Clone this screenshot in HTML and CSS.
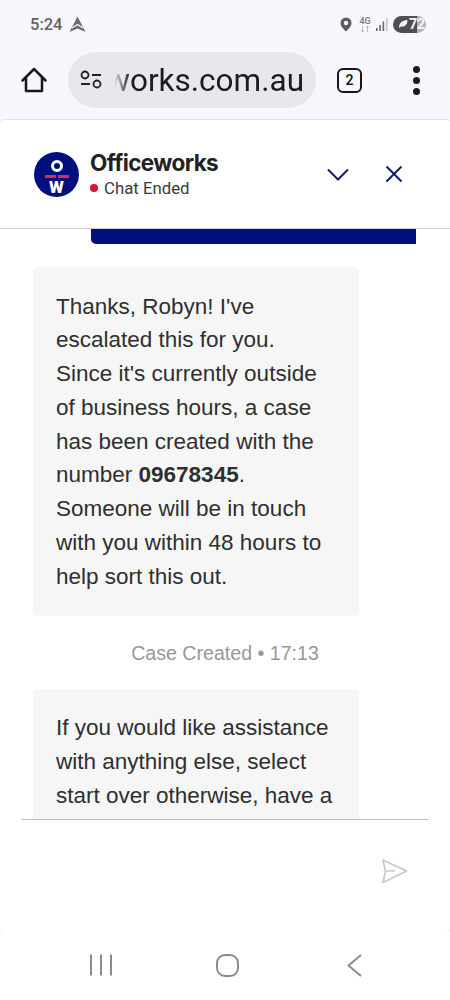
FILE: index.html
```html
<!DOCTYPE html>
<html lang="en">
<head>
    <meta charset="UTF-8">
    <meta name="viewport" content="width=device-width, initial-scale=1.0">
    <title>Officeworks chat</title>
    <link rel="stylesheet" href="styles.css">
</head>
<body>
    <div class="status_bar">
        <div class="status_left">
            <span class="clock">5:24</span>
            <svg class="nav_arrow" width="17" height="17" viewBox="0 0 17 17"><path d="M8.500 0.500 16.500 16 8.500 12.500 0.500 16Z" fill="#6b6b70"/><path d="M3 12 8.500 8.500 14 12" fill="none" stroke="#f8f7fd" stroke-width="1.300"/></svg>
        </div>
        <div class="status_right">
            <svg width="12" height="15" viewBox="0 0 12 15"><path fill-rule="evenodd" d="M6 0.500a5.500 5.500 0 0 1 5.500 5.500c0 3.500-3.500 6.500-5.500 8.500C4 12.500 0.500 9.500 0.500 6A5.500 5.500 0 0 1 6 0.500Zm0 3.300a2.200 2.200 0 1 0 0 4.400 2.200 2.200 0 0 0 0-4.400Z" fill="#5c5c60"/></svg>
            <div class="net">
                <span class="net_label">4G</span>
                <svg width="10" height="6" viewBox="0 0 10 6"><path d="M2.500 0v6M1 4.500 2.500 6 4 4.500M7.500 6V0M6 1.500 7.500 0 9 1.500" fill="none" stroke="#b0b0b4" stroke-width="0.900"/></svg>
            </div>
            <svg class="signal" width="12" height="14" viewBox="0 0 12 14"><rect x="0" y="11" width="1.600" height="3" fill="#67676b"/><rect x="3.300" y="8" width="1.600" height="6" fill="#67676b"/><rect x="6.600" y="4.500" width="1.600" height="9.500" fill="#67676b"/><rect x="10" y="1" width="1.600" height="13" fill="#c4c4c8"/></svg>
            <div class="battery">
                <svg width="10" height="10" viewBox="0 0 10 10"><path d="M1 9C1 4 4 1.500 9.500 1 9.500 6 6.500 8 3 7.500Z" fill="#f4f4f6"/></svg>
                <span>72</span>
            </div>
        </div>
    </div>

    <div class="toolbar">
        <svg class="home_icon" width="28" height="28" viewBox="0 0 28 28"><path d="M2.500 14.500 14 3 25.500 14.500M6 11.500V25H22V11.500" fill="none" stroke="#17171a" stroke-width="2.500" stroke-linejoin="round" stroke-linecap="round"/></svg>
        <div class="url_box">
            <svg class="tune_icon" width="22" height="20" viewBox="0 0 22 20"><circle cx="5" cy="5" r="3.500" fill="none" stroke="#222" stroke-width="1.800"/><path d="M12 5H21M1 14H10" stroke="#222" stroke-width="1.800" fill="none"/><circle cx="17" cy="14" r="3.500" fill="none" stroke="#222" stroke-width="1.800"/></svg>
            <div class="url_clip"><span>officeworks.com.au</span></div>
        </div>
        <div class="tab_count">2</div>
        <div class="menu_dots"><i></i><i></i><i></i></div>
    </div>

    <div class="chat_panel">
        <div class="chat_head">
            <div class="logo">
                <span class="logo_o"></span>
                <span class="logo_bars"><i></i><i></i></span>
                <span class="logo_w">W</span>
            </div>
            <div class="head_text">
                <div class="brand">Officeworks</div>
                <div class="chat_state"><i class="dot"></i>Chat Ended</div>
            </div>
            <div class="head_btns">
                <svg width="22" height="13" viewBox="0 0 22 13"><path d="M1 1.500 11 11.500 21 1.500" fill="none" stroke="#101a6e" stroke-width="2"/></svg>
                <svg width="18" height="18" viewBox="0 0 18 18"><path d="M1.500 1.500 16.500 16.500M16.500 1.500 1.500 16.500" fill="none" stroke="#101a6e" stroke-width="2"/></svg>
            </div>
        </div>

        <div class="messages">
            <div class="sent_bar"></div>
            <div class="bubble">Thanks, Robyn! I've escalated this for you. Since it's currently outside of business hours, a case has been created with the number <strong>09678345</strong>. Someone will be in touch with you within 48 hours to help sort this out.</div>
            <div class="msg_meta">Case Created • 17:13</div>
            <div class="bubble">If you would like assistance with anything else, select start over otherwise, have a great day!</div>
        </div>

        <div class="composer">
            <svg width="27" height="27" viewBox="0 0 27 27"><path d="M2 2 25.500 13 2 24.500 4.500 13ZM4.500 13H14" fill="none" stroke="#c6c8cb" stroke-width="1.700" stroke-linejoin="round"/></svg>
        </div>
    </div>

    <div class="nav_bar">
        <svg width="22" height="22" viewBox="0 0 22 22"><path d="M1 0.500V21.500M11 0.500V21.500M21 0.500V21.500" stroke="#8b8b8b" stroke-width="2" fill="none"/></svg>
        <svg class="nav_home" width="23" height="23" viewBox="0 0 23 23"><rect x="1" y="1" width="21" height="21" rx="8" fill="none" stroke="#8b8b8b" stroke-width="2"/></svg>
        <svg class="nav_back" width="15" height="23" viewBox="0 0 15 23"><path d="M14 1 1.500 11.500 14 22" stroke="#8b8b8b" stroke-width="2" fill="none"/></svg>
    </div>
</body>
</html>
```

FILE: styles.css
```css
* { box-sizing: border-box; }
html, body { margin: 0; height: 1000px; overflow: hidden; }
body { width: 450px; background: #f8f7fd; font-family: Roboto, "Liberation Sans", sans-serif; display: flex; flex-direction: column; }

.status_bar { height: 48px; flex: none; display: flex; justify-content: space-between; align-items: center; padding: 0 24px 0 30px; }
.status_left { display: flex; align-items: center; gap: 7px; }
.clock { font-size: 16.500px; font-weight: 500; color: #626266; }
.status_right { display: flex; align-items: center; }
.net { display: flex; flex-direction: column; align-items: center; width: 12px; line-height: 1; margin: 0 5px 0 7px; }
.net_label { font-size: 9px; font-weight: 500; color: #77777b; }
.battery { width: 33px; height: 17px; border-radius: 9px; display: flex; align-items: center; padding-left: 5px; gap: 1px; margin-left: 5px; background: linear-gradient(90deg, #4f4f53 0 72%, #b3b3b6 72%); }
.battery span { font-size: 14.500px; font-weight: 700; color: #f5f5f7; letter-spacing: -0.500px; }

.toolbar { height: 71px; flex: none; display: flex; align-items: center; padding: 0 0 7px 20px; }
.home_icon { flex: none; }
.url_box { width: 248px; height: 56px; margin-left: 20px; border-radius: 28px; background: #e8e8ec; display: flex; align-items: center; padding: 0 12px 0 12px; }
.tune_icon { flex: none; margin-right: 12px; }
.url_clip { flex: 1; overflow: hidden; display: flex; justify-content: flex-end; font-size: 31.500px; color: #1c1c20; white-space: nowrap; -webkit-mask-image: linear-gradient(90deg, transparent 0, #000 16px); mask-image: linear-gradient(90deg, transparent 0, #000 16px); }
.tab_count { width: 25px; height: 25px; margin-left: 21px; border: 2.500px solid #17171a; border-radius: 6px; display: flex; align-items: center; justify-content: center; font-size: 14px; font-weight: 600; color: #17171a; }
.menu_dots { margin-left: 51px; display: flex; flex-direction: column; gap: 4px; }
.menu_dots i { display: block; width: 7px; height: 7px; border-radius: 50%; background: #1b1b1f; }

.chat_panel { flex: 1; min-height: 0; width: 450px; background: #fff; border-top: 1px solid #e4e4ea; border-radius: 4px 4px 6px 6px; display: flex; flex-direction: column; }
.chat_head { height: 109px; flex: none; border-bottom: 1px solid #cfcfd2; display: flex; align-items: center; padding: 0 0 0 34px; }
.logo { width: 45px; height: 45px; border-radius: 50%; background: #000f7e; display: flex; flex-direction: column; align-items: center; flex: none; padding-top: 8px; }
.logo_o { width: 12px; height: 12px; border: 3px solid #fff; border-radius: 50%; }
.logo_bars { display: flex; gap: 2px; margin-top: 3px; }
.logo_bars i { display: block; width: 11px; height: 3px; background: #d2305a; }
.logo_w { font-size: 17px; line-height: 15px; font-weight: 900; color: #fff; margin-top: 2px; }
.head_text { margin-left: 11px; flex: 1; }
.brand { font-family: Inter, Roboto, sans-serif; font-size: 22.500px; line-height: 26px; font-weight: 700; color: #222; letter-spacing: -0.600px; }
.chat_state { display: flex; align-items: center; font-size: 16.800px; line-height: 22px; color: #3a3a3c; margin-top: 1px; }
.dot { width: 8px; height: 8px; border-radius: 50%; background: #d9162f; margin-right: 6px; }
.head_btns { display: flex; align-items: center; gap: 36px; padding-right: 47px; }

.messages { flex: 1; min-height: 0; overflow: hidden; padding: 0 0 0 33px; }
.sent_bar { width: 325px; height: 15px; margin-left: 58px; background: #000f7e; border-radius: 0 0 0 5px; }
.bubble { width: 326px; margin-top: 23px; padding: 22.500px 25px 22.500px 23px; background: #f6f6f6; border-radius: 5px; font-family: "Liberation Sans", Arial, sans-serif; font-size: 22.500px; line-height: 33.750px; color: #2f2f2f; }
.bubble strong { font-weight: 700; }
.msg_meta { margin: 24px 0 3px -33px; width: 450px; text-align: center; font-family: "Liberation Sans", Arial, sans-serif; font-size: 19.600px; line-height: 26px; color: #989898; }

.composer { height: 113px; flex: none; margin: 0 22px; border-top: 1px solid #bdbdbd; display: flex; justify-content: flex-end; padding: 38px 20px 0 0; }

.nav_bar { height: 68px; flex: none; background: #fff; display: flex; align-items: center; justify-content: center; padding: 0 0 2px 2px; }
.nav_home { margin-left: 104px; }
.nav_back { margin-left: 108px; }
```
